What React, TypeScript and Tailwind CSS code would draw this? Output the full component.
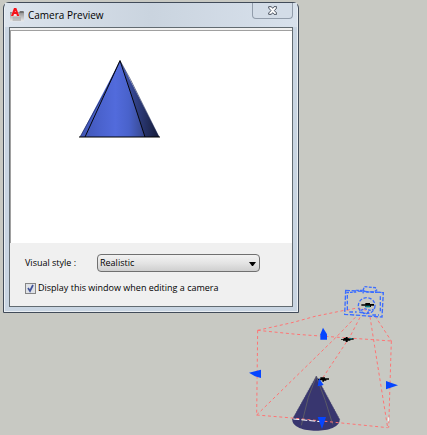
import { useState } from "react";

const AppIcon = () => (
  <svg viewBox="0 0 42 42" className="h-3.5 w-3.5 shrink-0" aria-hidden="true">
    <defs>
      <linearGradient id="body" x1="0" y1="0" x2="0" y2="1">
        <stop offset="0" stopColor="#8c8c8c" />
        <stop offset="1" stopColor="#ececec" />
      </linearGradient>
    </defs>
    <rect x="0" y="12" width="42" height="28" fill="url(#body)" />
    <rect x="29" y="9" width="12" height="6" fill="#707070" />
    <path d="M8 27 H33 V39 H8 Z" fill="#a9a9a9" opacity="0.6" />
    <path d="M2 25 L12 0 H19 L29 25 Z" fill="#f3dfe1" />
    <path d="M3 24 L12 0 H19 L28 24 H21 L19 18 H12 L10 24 Z M14 12 H17 L16 8 Z" fill="#f51219" fillRule="evenodd" />
  </svg>
);

const PreviewCone = () => (
  <svg viewBox="0 0 246 234" className="h-[78px] w-[82px]" aria-hidden="true">
    <defs>
      <linearGradient id="cone" x1="0" y1="0" x2="1" y2="0">
        <stop offset="0" stopColor="#3f54b2" />
        <stop offset="0.25" stopColor="#4a62cd" />
        <stop offset="0.45" stopColor="#526bdc" />
        <stop offset="0.62" stopColor="#4962cb" />
        <stop offset="0.76" stopColor="#3c4f9f" />
        <stop offset="1" stopColor="#11172f" />
      </linearGradient>
      <linearGradient id="shade" x1="0" y1="0" x2="1" y2="0">
        <stop offset="0" stopColor="#4359b8" />
        <stop offset="1" stopColor="#151b38" />
      </linearGradient>
    </defs>
    <path d="M123 2 L3 231 H240 Z" fill="url(#cone)" />
    <path d="M123 2 L198 231 H240 Z" fill="url(#shade)" />
    <path d="M123 2 L80 92 L3 231 M123 2 L154 58 L240 231" fill="none" stroke="#202b58" strokeWidth="2" />
    <path d="M123 2 L18 231 M123 2 L157 105 L198 231" fill="none" stroke="#05060c" strokeWidth="3" />
    <path d="M0 231 H243" stroke="#000000" strokeWidth="3" />
  </svg>
);

// View frustum, camera glyph and target of the drawing
const CameraScene = () => (
  <svg viewBox="0 0 561 465" className="absolute right-0 bottom-0 h-[155px] w-[187px]" aria-hidden="true">
    <path d="M229 288 L157 418 C153 464 303 464 299 418 Z" fill="#38366f" />
    <path d="M229 288 L157 418 M229 288 L299 418" stroke="#55556e" strokeWidth="2" strokeDasharray="4 4" />
    <path d="M228 292 L205 352 L184 436 M230 292 L256 362 L278 433" fill="none" stroke="#5b5b67" strokeWidth="3" />

    <g fill="none" stroke="#ff7474" strokeWidth="3" strokeDasharray="9 8">
      <path d="M53 151 L160 127 L225 109 L313 91" />
      <path d="M53 151 L170 163 L454 183" />
      <path d="M53 151 L50 405" />
      <path d="M50 405 L157 414 L443 443" />
      <path d="M454 183 L446 443" />
      <path d="M50 405 L290 170 L346 112" />
      <path d="M390 110 L404 200 L443 443" />
      <path d="M405 108 L454 183" />
      <path d="M360 112 L330 170 L246 297" />
      <path d="M320 91 L350 84 L384 92 L390 112" />
    </g>
    <path d="M160 417 L252 426" stroke="#ffffff" strokeWidth="3" strokeDasharray="18 6" />
    <path d="M445 412 V424" stroke="#ffffff" strokeWidth="3" />

    <g fill="none" stroke="#3b6dff" strokeWidth="4">
      <path d="M317 31 L430 38 L426 111 L314 103 Z" strokeDasharray="13 5" />
      <path d="M319 38 L347 36 L349 31 H368 L370 40 M394 37 H424" strokeDasharray="8 3" />
      <path d="M369 32 L373 20 L406 23 L410 30 L402 36 H381 Z" strokeDasharray="9 4" />
      <path d="M322 45 V94 M421 49 V99 M328 96 H350 M397 105 H417" strokeDasharray="11 6" />
      <ellipse cx="380" cy="77" rx="25" ry="24" strokeDasharray="10 5" />
      <path d="M362 91 L374 86 L390 91 L401 88 M358 96 L372 101 L387 96" strokeDasharray="8 4" />
    </g>

    <g fill="#000000">
      <path d="M364 73 H376 V69 H390 V72 H402 V77 H393 V81 H376 V77 H364 Z" />
      <path d="M303 177 H311 V174 H317 V171 H323 V175 H341 V179 H331 V182 H323 V186 H317 V182 H309 V179 H303 Z" />
      <path d="M234 296 H241 V292 H255 V295 H267 V299 H259 V302 H252 V305 H247 V301 H234 Z" />
    </g>
    <path d="M376 77 H390 V82 H376 Z" fill="#087f84" />
    <path d="M327 174 H336 V177 H327 Z" fill="#087f84" />

    <g fill="#0645ff">
      <path d="M249 143 L241 163 V179 H261 V163 Z" />
      <path d="M27 278 L63 269 V294 L45 289 Z" />
      <path d="M474 316 L438 303 V328 Z" />
      <path d="M233 411 H258 L246 447 Z" />
      <path d="M233 319 L237 295 L251 315 Z" />
    </g>
  </svg>
);

const App = () => {
  const [showPreview, setShowPreview] = useState(true);
  const [visualStyle, setVisualStyle] = useState("Realistic");

  return (
    <main className="relative min-h-screen bg-[#c8c9c3] pt-0.5 pr-32 pb-[120px] pl-[3px] font-['Open_Sans',sans-serif] text-black">
      <section className="rounded-t-md border border-[#414b59] bg-[#c9d5e2] px-[5px] pb-[5px] ring-1 ring-white/60 ring-inset" aria-label="Camera Preview">
        <header className="-mx-1 flex h-6 items-center bg-linear-to-r from-[#dce4ed] via-[#cad4df] to-[#d8e1ec] pr-1 pl-[5px]">
          <AppIcon />
          <h1 className="ml-1 grow text-[10px] leading-4">Camera Preview</h1>
          <button
            type="button"
            aria-label="Close"
            className="flex h-4 w-[41px] items-center justify-center self-start rounded-b-sm border border-t-0 border-[#929dab] bg-[#d3dce7]"
          >
            <svg viewBox="0 0 27 27" className="h-[9px] w-[9px]" aria-hidden="true">
              <path
                d="M2 2 H10 L14 7 L18 2 H26 V6 L19 14 L26 21 V25 H18 L14 20 L10 25 H2 V21 L9 14 L2 6 Z"
                fill="#ffffff"
                stroke="#4b5360"
                strokeWidth="3"
              />
            </svg>
          </button>
        </header>

        <div className="border border-[#626b71] bg-[#f0f0f0] pt-0.5">
          <div className="flex h-[213px] justify-start border-t border-l border-[#a0a0a0] bg-white pt-[29px] pl-[68px]">
            <PreviewCone />
          </div>

          <form className="px-[15px] pt-[11px] pb-2.5 text-[9px] leading-4">
            <div className="flex items-center">
              <label htmlFor="visual-style" className="w-[72px]">
                Visual style :
              </label>
              <div className="relative w-[163px]">
                <select
                  id="visual-style"
                  value={visualStyle}
                  onChange={(e) => setVisualStyle(e.target.value)}
                  className="block h-[18px] w-full appearance-none rounded-sm border border-[#707070] bg-linear-to-b from-[#f2f2f2] via-[#e4e4e4] to-[#cfcfcf] pl-0.5 leading-4"
                >
                  <option>Realistic</option>
                  <option>Conceptual</option>
                  <option>Wireframe</option>
                </select>
                <svg viewBox="0 0 7 4" className="pointer-events-none absolute top-2 right-1 h-1 w-[7px]" aria-hidden="true">
                  <path d="M0 0 H7 L4 4 H3 Z" fill="#000000" />
                </svg>
              </div>
            </div>

            <label className="mt-2 flex items-center gap-0.5">
              <span className="relative h-[11px] w-[11px] shrink-0">
                <input
                  type="checkbox"
                  checked={showPreview}
                  onChange={(e) => setShowPreview(e.target.checked)}
                  className="block h-[11px] w-[11px] appearance-none border border-[#858585] bg-[#dfe2e7]"
                />
                {showPreview && (
                  <svg viewBox="0 0 11 11" className="pointer-events-none absolute inset-0" aria-hidden="true">
                    <path d="M3 5 L5 8 L8 2" fill="none" stroke="#405299" strokeWidth="1.7" />
                  </svg>
                )}
              </span>
              <span className="whitespace-nowrap">Display this window when editing a camera</span>
            </label>
          </form>
        </div>
      </section>

      <CameraScene />
    </main>
  );
};

export default App;
